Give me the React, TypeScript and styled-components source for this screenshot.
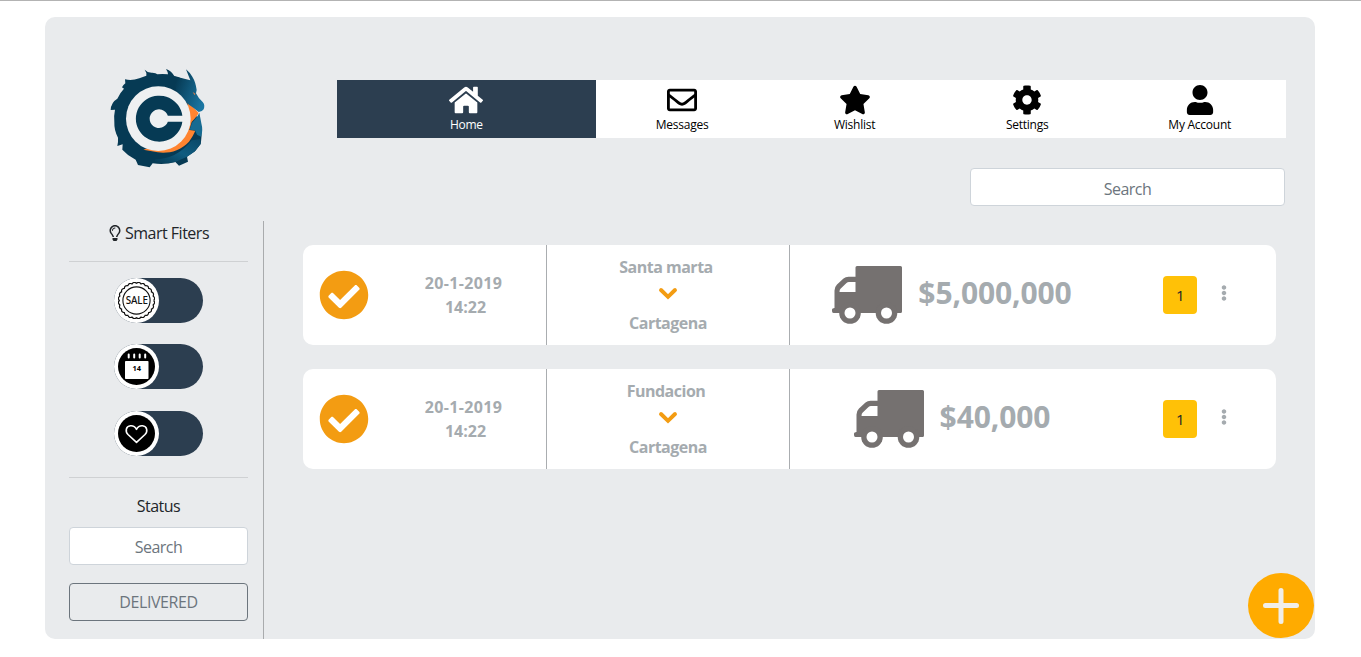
import React from "react";
import styled, { createGlobalStyle } from "styled-components";
import {
  FaHome,
  FaRegEnvelope,
  FaStar,
  FaCog,
  FaUser,
  FaRegLightbulb,
  FaCheckCircle,
  FaEllipsisV,
} from "react-icons/fa";

const navy = "#2c3e50";
const grey = "#a5abaf";
const amber = "#f39c12";

const GlobalStyle = createGlobalStyle`
  *, *::before, *::after { box-sizing: border-box; }
  body {
    margin: 0;
    background: #fff;
    color: #212529;
    font-family: "Segoe UI", "Open Sans", "Noto Sans", sans-serif;
    font-size: 16px;
    line-height: 24px;
    letter-spacing: -0.5px;
  }
  svg { display: block; }
`;

const Page = styled.div`
  height: 657px;
  padding: 16px 46px 18px 45px;
  border-top: 1px solid #b3b3b3;
  overflow: hidden;
`;

const Panel = styled.div`
  position: relative;
  display: flex;
  flex-direction: column;
  height: 622px;
  border-radius: 10px;
  background: #e9ebed;
`;

const Header = styled.header`
  display: flex;
  height: 204px;
`;

const Brand = styled.div`
  width: 292px;
  padding: 38px 0 0 45px;
`;

const HeaderMain = styled.div`
  flex: 1;
  display: flex;
  flex-direction: column;
  align-items: flex-end;
  padding: 63px 29px 0 0;
  gap: 30px;
`;

const Nav = styled.nav`
  display: flex;
  width: 100%;
  height: 58px;
  background: #fff;
`;

const NavItem = styled.button<{ $active?: boolean }>`
  flex: ${(p) => (p.$active ? 1.5 : 1)} 1 0;
  display: flex;
  flex-direction: column;
  align-items: center;
  gap: 1px;
  padding: 5px 0 0;
  border: 0;
  background: ${(p) => (p.$active ? navy : "#fff")};
  color: ${(p) => (p.$active ? "#fff" : "#000")};
  font: inherit;
  font-size: 12px;
  letter-spacing: -0.25px;
  line-height: 18px;
`;

const IconSlot = styled.span`
  display: flex;
  align-items: center;
  justify-content: center;
  height: 30px;
`;

const SearchInput = styled.input<{ $offset?: number }>`
  width: 100%;
  height: 38px;
  padding: ${(p) => 1 + (p.$offset ?? 0)}px 12px 0;
  border: 1px solid #ced4da;
  border-radius: 4px;
  background: #fff;
  font: inherit;
  letter-spacing: inherit;
  text-align: center;
  &::placeholder { color: #6c757d; opacity: 1; }
`;

const HeaderSearch = styled.div`
  width: 315px;
  margin-right: 1px;
`;

const Body = styled.div`
  flex: 1;
  display: flex;
`;

const Sidebar = styled.aside`
  display: flex;
  flex-direction: column;
  width: 219px;
  padding: 0 15px 0 24px;
  border-right: 1px solid #a9abad;
`;

const FilterTitle = styled.div`
  display: flex;
  align-items: center;
  justify-content: center;
  gap: 2px;
  height: 40px;
  padding: 0 1px 16px 0;
`;

const Filters = styled.div`
  display: flex;
  flex-direction: column;
  align-items: center;
  gap: 21.4px;
  height: 217px;
  padding-top: 16px;
  border-top: 1px solid #cfd1d3;
  border-bottom: 1px solid #cfd1d3;
`;

const Toggle = styled.div`
  display: flex;
  align-items: center;
  width: 89px;
  height: 45px;
  border-radius: 23px;
  background: ${navy};
`;

const Knob = styled.div`
  display: flex;
  align-items: center;
  justify-content: center;
  width: 45px;
  height: 45px;
  border-radius: 50%;
  background: #fff;
`;

const StatusTitle = styled.div`
  padding: 16px 0 9px;
  text-align: center;
`;

const OutlineButton = styled.button`
  height: 38px;
  margin-top: 18px;
  padding: 0;
  border: 1px solid #6c757d;
  border-radius: 4px;
  background: transparent;
  color: #6c757d;
  font: inherit;
  letter-spacing: -0.4px;
`;

const Orders = styled.main`
  flex: 1;
  display: flex;
  flex-direction: column;
  gap: 24px;
  padding: 24px 39px 0 39px;
`;

const Card = styled.article`
  display: grid;
  grid-template-columns: 244px 243px 1fr;
  height: 100px;
  border-radius: 10px;
  background: #fff;
  color: ${grey};
  font-weight: 700;
`;

const WhenCell = styled.div`
  display: flex;
  align-items: center;
  border-right: 1px solid #aaadb0;
`;

const CheckSlot = styled.div`
  width: 78px;
  padding-left: 16px;
  color: ${amber};
`;

const When = styled.div`
  flex: 1;
  letter-spacing: 0.35px;
  text-align: center;
`;

const Time = styled.div`
  padding-left: 4px;
  letter-spacing: 0;
`;

const RouteCell = styled.div`
  display: flex;
  flex-direction: column;
  align-items: center;
  padding-top: 10px;
  border-right: 1px solid #aaadb0;
`;

const Origin = styled.span`
  padding-right: 4px;
`;

const Arrow = styled.div`
  height: 32px;
  padding-top: 8px;
`;

const CargoCell = styled.div`
  display: flex;
  align-items: center;
`;

const PriceGroup = styled.div`
  display: flex;
  justify-content: center;
  align-items: center;
  gap: 16px;
  width: 324px;
`;

const Price = styled.span`
  margin-top: -5px;
  font-size: 30px;
  letter-spacing: -0.1px;
  line-height: 36px;
`;

const Count = styled.span`
  width: 34px;
  height: 38px;
  margin-left: 49px;
  border-radius: 4px;
  background: #ffc107;
  color: #212529;
  font-size: 15px;
  font-weight: 400;
  line-height: 38px;
  text-align: center;
`;

const Menu = styled.div`
  margin: -4px 0 0 19px;
`;

const AddButton = styled.button`
  position: absolute;
  right: 1px;
  bottom: 1px;
  width: 66px;
  height: 65px;
  padding: 0;
  border: 0;
  border-radius: 50%;
  background: #ffab00;
`;

const Logo = () => (
  <svg width="130" height="125" viewBox="-45 -21 390 375">
    <defs>
      <linearGradient id="head" x1="0" y1="0.2" x2="1" y2="0.7">
        <stop offset="0.1" stopColor="#063a54" />
        <stop offset="1" stopColor="#1b76a2" />
      </linearGradient>
      <linearGradient id="tail" x1="0" y1="1" x2="1" y2="0">
        <stop offset="0" stopColor="#063a54" />
        <stop offset="0.5" stopColor="#105c80" />
        <stop offset="1" stopColor="#0a4868" />
      </linearGradient>
    </defs>
    <path
      fill="#063a54"
      d="M119 23Q128 33 142 32Q153 32 157 37Q172 35 189 37Q189 30 183 21Q198 25 208 42Q232 47 252 64L262 130 285 190Q293 200 288 240L287 246Q280 255 270 268L246 284 249 299 222 311 211 300Q180 309 143 304L134 316 99 309 92 293Q68 281 52 263L53 247 37 252Q40 240 39 227Q27 205 28 181 26 161 30 143L17 144Q18 121 37 110 45 92 57 80L51 76Q55 68 61 64L60 52Q80 57 103 49L124 41Q126 32 119 23Z"
    />
    <path fill="url(#tail)" d="M150 292Q215 292 260 235L286 232 287 246Q280 255 270 268L246 284 211 300Q180 306 150 300Z" />
    <path fill="#ff8430" d="M248 122Q265 133 281 153Q276 163 260 180L253 204 271 206Q264 223 252 239C225 268 190 275 158 271L115 263 190 240 245 190Z" />
    <path
      fill="url(#head)"
      d="M205 43Q228 48 256 55Q250 40 243 22Q257 34 262 44 272 60 275 84L273 94Q280 109 293 120 301 129 296 142 291 150 281 150 265 137 250 127 231 108 214 85Z"
    />
    <path fill="#166b92" d="M283 152Q278 164 261 182L254 203 270 205 276 218 288 224Q295 206 289 184Z" />
    <path fill="#e07b44" d="M263 90L271 95 269 100Z" />
    <circle cx="160" cy="170" r="97" fill="#eef0f1" />
    <path fill="#063a54" d="M232 161H188.500A28 28 0 1 0 188.500 179H232A70 69 0 1 1 232 161Z" />
  </svg>
);

const scallops = Array.from({ length: 24 }, (_, i) => {
  const at = (k: number, r: number) => {
    const a = (k * Math.PI) / 24;
    return `${(18.5 + r * Math.cos(a)).toFixed(2)} ${(18.5 + r * Math.sin(a)).toFixed(2)}`;
  };
  return `${i === 0 ? `M${at(0, 17.2)}` : ""}Q${at(i * 2 + 1, 19.4)} ${at(i * 2 + 2, 17.2)}`;
}).join("");

const SaleIcon = () => (
  <svg width="37" height="37" viewBox="0 0 37 37">
    <path d={scallops} fill="none" stroke="#111" strokeWidth="1.2" />
    <circle cx="18.5" cy="18.5" r="13.6" fill="none" stroke="#111" strokeWidth="1.1" />
    <text x="18.8" y="22" textAnchor="middle" fontFamily="Noto Sans, sans-serif" fontSize="9.8" fontWeight="500" letterSpacing="-0.1" fill="#111">
      SALE
    </text>
  </svg>
);

const CalendarIcon = () => (
  <svg width="37" height="37" viewBox="0 0 37 37">
    <circle cx="18.5" cy="18.5" r="18.5" />
    <path d="M10.7 6.500v3M16.2 6.500v3M21.7 6.500v3M27.2 6.500v3" stroke="#fff" strokeWidth="2" strokeLinecap="round" />
    <rect x="7" y="13" width="23.5" height="18" rx="0.8" fill="#fff" />
    <text x="18.7" y="23.4" textAnchor="middle" fontFamily="Noto Sans, sans-serif" fontSize="7.4" fontWeight="700" letterSpacing="0">
      14
    </text>
  </svg>
);

const HeartIcon = () => (
  <svg width="37" height="37" viewBox="0 0 37 37">
    <circle cx="18.5" cy="18.5" r="18.5" />
    <path
      d="M18.5 27.400L10 19.500C7 16.500 7.800 11.200 12.500 10.800C15.200 10.600 17.300 12 18.500 14.300C19.700 12 21.800 10.600 24.500 10.800C29.200 11.200 30 16.500 27 19.500Z"
      fill="none"
      stroke="#fff"
      strokeWidth="1.6"
      strokeLinejoin="round"
    />
  </svg>
);

const ChevronIcon = () => (
  <svg width="20" height="13" viewBox="0 0 20 13">
    <path d="M3 3L10 9.800L17 3" fill="none" stroke={amber} strokeWidth="3.900" strokeLinecap="round" />
  </svg>
);

const TruckIcon = () => (
  <svg width="70" height="58" viewBox="0 0 70 58" fill="#757170">
    <path
      fillRule="evenodd"
      d="M25 0H68.500Q70 0 70 1.500V45.500Q70 47 68.500 47H1.500Q0 47 0 45V43.500Q0 42 2.500 42V24.500Q2.500 21 5 18.500L11.500 12.500Q13.500 10.700 16.500 10.700H23.500V1.500Q23.500 0 25 0ZM7.500 26H23.500V16H17Q15.500 16 14.500 17L8.500 22.700Q7.500 23.700 7.500 26Z"
    />
    <circle cx="18" cy="47" r="10.800" />
    <circle cx="54.500" cy="47" r="10.800" />
    <circle cx="18" cy="47" r="5.500" fill="#fff" />
    <circle cx="54.500" cy="47" r="5.500" fill="#fff" />
  </svg>
);

const PlusIcon = () => (
  <svg width="66" height="65" viewBox="0 0 66 65">
    <path d="M33 17.500V48.500M17.500 32.500H48.500" stroke="#f1eee8" strokeWidth="5" strokeLinecap="round" />
  </svg>
);

const navItems = [
  { label: "Home", icon: <FaHome size={34} />, active: true },
  { label: "Messages", icon: <FaRegEnvelope size={30} /> },
  { label: "Wishlist", icon: <FaStar size={32} /> },
  { label: "Settings", icon: <FaCog size={30} /> },
  { label: "My Account", icon: <FaUser size={30} /> },
];

const filters = [
  { name: "sale", icon: <SaleIcon /> },
  { name: "date", icon: <CalendarIcon /> },
  { name: "favourite", icon: <HeartIcon /> },
];

const orders = [
  { from: "Santa marta", to: "Cartagena", price: "$5,000,000" },
  { from: "Fundacion", to: "Cartagena", price: "$40,000" },
];

export default function App() {
  return (
    <>
      <GlobalStyle />
      <Page>
        <Panel>
          <Header>
            <Brand>
              <Logo />
            </Brand>
            <HeaderMain>
              <Nav>
                {navItems.map((item) => (
                  <NavItem key={item.label} $active={item.active}>
                    <IconSlot>{item.icon}</IconSlot>
                    {item.label}
                  </NavItem>
                ))}
              </Nav>
              <HeaderSearch>
                <SearchInput placeholder="Search" $offset={2} />
              </HeaderSearch>
            </HeaderMain>
          </Header>
          <Body>
            <Sidebar>
              <FilterTitle>
                <FaRegLightbulb size={16} />
                Smart Fiters
              </FilterTitle>
              <Filters>
                {filters.map((filter) => (
                  <Toggle key={filter.name}>
                    <Knob>{filter.icon}</Knob>
                  </Toggle>
                ))}
              </Filters>
              <StatusTitle>Status</StatusTitle>
              <SearchInput placeholder="Search" />
              <OutlineButton>DELIVERED</OutlineButton>
            </Sidebar>
            <Orders>
              {orders.map((order) => (
                <Card key={order.from}>
                  <WhenCell>
                    <CheckSlot>
                      <FaCheckCircle size={50} />
                    </CheckSlot>
                    <When>
                      <div>20-1-2019</div>
                      <Time>14:22</Time>
                    </When>
                  </WhenCell>
                  <RouteCell>
                    <Origin>{order.from}</Origin>
                    <Arrow>
                      <ChevronIcon />
                    </Arrow>
                    <span>{order.to}</span>
                  </RouteCell>
                  <CargoCell>
                    <PriceGroup>
                      <TruckIcon />
                      <Price>{order.price}</Price>
                    </PriceGroup>
                    <Count>1</Count>
                    <Menu>
                      <FaEllipsisV size={16} />
                    </Menu>
                  </CargoCell>
                </Card>
              ))}
            </Orders>
          </Body>
          <AddButton aria-label="Add">
            <PlusIcon />
          </AddButton>
        </Panel>
      </Page>
    </>
  );
}
